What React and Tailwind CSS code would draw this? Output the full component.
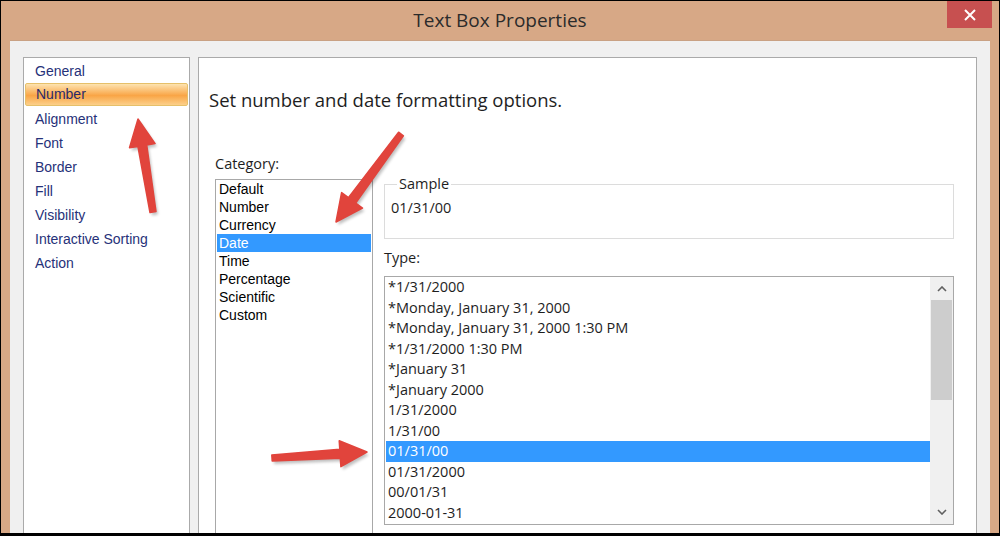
import React from 'react';

const pages = ['General', 'Number', 'Alignment', 'Font', 'Border', 'Fill', 'Visibility', 'Interactive Sorting', 'Action'];
const categories = ['Default', 'Number', 'Currency', 'Date', 'Time', 'Percentage', 'Scientific', 'Custom'];
const types = [
  '*1/31/2000',
  '*Monday, January 31, 2000',
  '*Monday, January 31, 2000 1:30 PM',
  '*1/31/2000 1:30 PM',
  '*January 31',
  '*January 2000',
  '1/31/2000',
  '1/31/00',
  '01/31/00',
  '01/31/2000',
  '00/01/31',
  '2000-01-31',
];

// red callout arrow, built from tail -> tip
function arrowPoints(tx, ty, hx, hy) {
  const dx = hx - tx;
  const dy = hy - ty;
  const len = Math.hypot(dx, dy);
  const ux = dx / len;
  const uy = dy / len;
  const nx = -uy;
  const ny = ux;
  const headLen = 27;
  const headW = 13;
  const tailW = 3;
  const neckW = 4.5;
  const bx = hx - ux * headLen;
  const by = hy - uy * headLen;
  const pts = [
    [tx + nx * tailW, ty + ny * tailW],
    [bx + nx * neckW, by + ny * neckW],
    [bx + nx * headW, by + ny * headW],
    [hx, hy],
    [bx - nx * headW, by - ny * headW],
    [bx - nx * neckW, by - ny * neckW],
    [tx - nx * tailW, ty - ny * tailW],
  ];
  return pts.map((p) => p[0].toFixed(1) + ',' + p[1].toFixed(1)).join(' ');
}

function Arrow({ from, to }) {
  return (
    <g>
      <polygon points={arrowPoints(from[0], from[1], to[0], to[1])} fill="#000" opacity="0.25" transform="translate(2 3)" filter="url(#blur)" />
      <polygon points={arrowPoints(from[0], from[1], to[0], to[1])} fill="#e1443c" strokeLinejoin="round" stroke="#e1443c" strokeWidth="1.5" />
    </g>
  );
}

export default function App() {
  return (
    <div className="relative w-[1000px] h-[536px] overflow-hidden bg-[#d7a886] border-l border-t border-r border-black border-b-[3px] flex flex-col">
      {/* title bar */}
      <div className="relative h-[39px] shrink-0 flex items-center justify-center">
        <span className="text-[19px] text-[#2b2b2b] font-['Open_Sans',sans-serif] -mt-[1px]">Text Box Properties</span>
        <div className="absolute right-[7px] top-0 w-[45px] h-[27px] bg-[#c75050] flex items-center justify-center">
          <svg width="12" height="12" viewBox="0 0 12 12">
            <path d="M1 1 L11 11 M11 1 L1 11" stroke="#fff" strokeWidth="2" />
          </svg>
        </div>
      </div>

      {/* dialog body */}
      <div className="flex-1 mx-[9px] bg-[#f0f0f0] border-t border-[#c9a183] pt-[16px] px-[13px] flex gap-[8px] overflow-hidden">
        {/* page list */}
        <div className="w-[167px] h-[500px] shrink-0 bg-white border border-[#aaaaaa] pt-[1px] font-['Liberation_Sans',Arial,sans-serif] text-[14px] text-[#263179]">
          {pages.map((p) => (
            <div
              key={p}
              className={
                p === 'Number'
                  ? 'h-[23px] mx-[1px] mb-[1px] pl-[10px] flex items-center border border-[#e6c06a] rounded-[2px] bg-[linear-gradient(#fde3b0,#f9a546_55%,#fcd08a)] text-[#2a2a6a]'
                  : 'h-[24px] pl-[11px] flex items-center'
              }
            >
              {p}
            </div>
          ))}
        </div>

        {/* properties page */}
        <div className="w-[779px] h-[500px] shrink-0 bg-white border border-[#aaaaaa] font-['Open_Sans',sans-serif] text-[#1e1e1e]">
          <div className="mt-[30px] pl-[10px] text-[18.5px] leading-[24px]">Set number and date formatting options.</div>

          <div className="mt-[42px] pl-[16px] flex gap-[11px]">
            <div className="w-[158px] shrink-0">
              <div className="text-[14.5px] leading-[20px] mb-[5px]">Category:</div>
              <div className="h-[400px] border border-[#a8a8a8] font-['Liberation_Sans',Arial,sans-serif] text-[14px] text-black">
                {categories.map((c) => (
                  <div
                    key={c}
                    className={
                      c === 'Date'
                        ? 'h-[18px] mx-[1px] pl-[2px] leading-[18px] bg-[#3399ff] text-white'
                        : 'h-[18px] pl-[3px] leading-[18px]'
                    }
                  >
                    {c}
                  </div>
                ))}
              </div>
            </div>

            <div className="w-[570px] shrink-0">
              <fieldset className="mt-[20px] h-[65px] border border-[#dcdcdc] pl-[6px]">
                <legend className="ml-[6px] px-[2px] text-[14.5px] leading-[20px]">Sample</legend>
                <div className="text-[14.5px] leading-[20px] mt-[4px]">01/31/00</div>
              </fieldset>
              <div className="mt-[9px] text-[14.5px] leading-[20px]">Type:</div>
              <div className="mt-[8px] h-[249px] border border-[#a8a8a8] flex">
                <div className="flex-1 text-[14.5px]">
                  {types.map((t) => (
                    <div
                      key={t}
                      className={
                        t === '01/31/00'
                          ? 'h-[20.5px] ml-[1px] pl-[2px] leading-[20.5px] bg-[#3399ff] text-white'
                          : 'h-[20.5px] pl-[3px] leading-[20.5px]'
                      }
                    >
                      {t}
                    </div>
                  ))}
                </div>
                <div className="w-[23px] shrink-0 bg-[#f0f0f0] flex flex-col items-center">
                  <div className="h-[23px] flex items-center justify-center">
                    <svg width="10" height="6" viewBox="0 0 10 6">
                      <path d="M1 5 L5 1 L9 5" stroke="#606060" strokeWidth="1.6" fill="none" />
                    </svg>
                  </div>
                  <div className="w-[21px] h-[100px] bg-[#cdcdcd]" />
                  <div className="flex-1" />
                  <div className="h-[24px] flex items-center justify-center">
                    <svg width="10" height="6" viewBox="0 0 10 6">
                      <path d="M1 1 L5 5 L9 1" stroke="#606060" strokeWidth="1.6" fill="none" />
                    </svg>
                  </div>
                </div>
              </div>
            </div>
          </div>
        </div>
      </div>

      {/* callout arrows drawn over the dialog */}
      <svg className="absolute left-[-1px] top-[-1px] pointer-events-none" width="1000" height="536" viewBox="0 0 1000 536">
        <defs>
          <filter id="blur" x="-20%" y="-20%" width="140%" height="140%">
            <feGaussianBlur stdDeviation="1.5" />
          </filter>
        </defs>
        <Arrow from={[153, 212]} to={[138, 119]} />
        <Arrow from={[401, 134]} to={[336, 222]} />
        <Arrow from={[272, 458]} to={[367, 452]} />
      </svg>
    </div>
  );
}
